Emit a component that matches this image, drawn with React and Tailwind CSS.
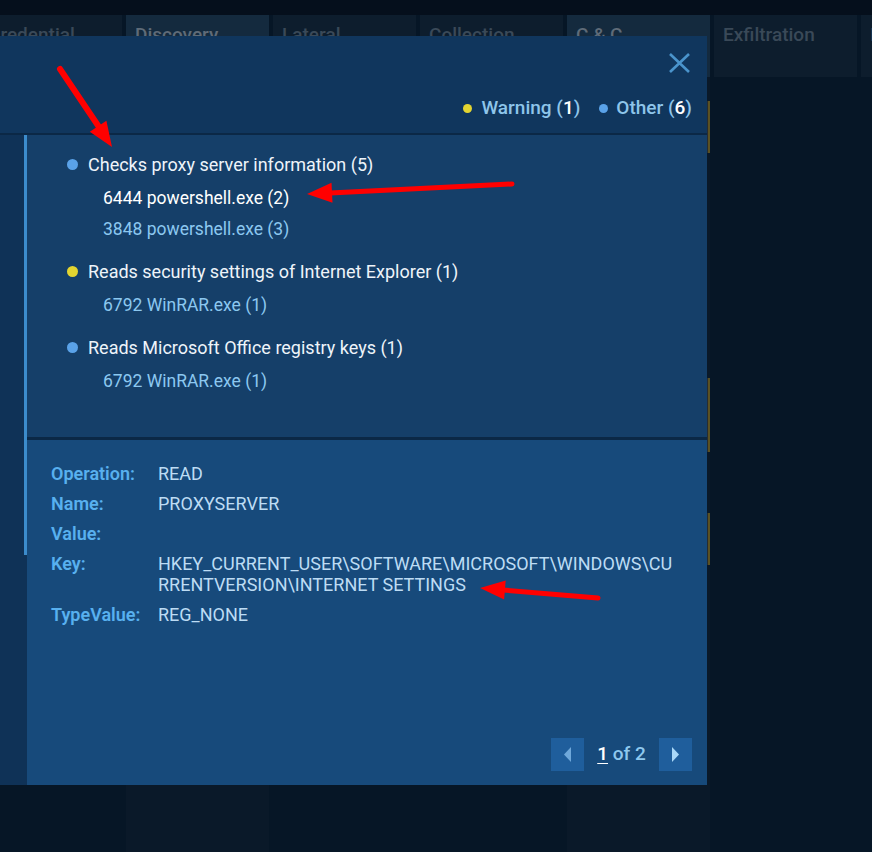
import React from 'react';

const columns = [
    { name: 'Credential', active: false, first: true },
    { name: 'Discovery', active: true },
    { name: 'Lateral', active: false },
    { name: 'Collection', active: false },
    { name: 'C & C', active: true, cards: true },
    { name: 'Exfiltration', active: false },
    { name: 'Impact', active: false },
];

const signatures = [
    {
        title: 'Checks proxy server information (5)',
        dot: 'bg-[#5aa2e8]',
        items: [
            { label: '6444 powershell.exe (2)', selected: true },
            { label: '3848 powershell.exe (3)' },
        ],
    },
    {
        title: 'Reads security settings of Internet Explorer (1)',
        dot: 'bg-[#e3d531]',
        items: [{ label: '6792 WinRAR.exe (1)' }],
    },
    {
        title: 'Reads Microsoft Office registry keys (1)',
        dot: 'bg-[#5aa2e8]',
        items: [{ label: '6792 WinRAR.exe (1)' }],
    },
];

function Column({ col }) {
    return (
        <div className={`flex flex-col w-[143px] shrink-0 ${col.first ? 'ml-[-21px]' : ''}`}>
            <div className={`h-[62px] pl-[9px] pt-[6px] text-[19px] font-medium ${col.active ? 'bg-[#142a3e] text-[#5f6b78]' : 'bg-[#0d1d2d] text-[#3a4958]'}`}>
                {col.name}
            </div>
            <div className={`flex-1 flex flex-col ${col.active ? 'bg-[#0a1929]' : ''}`}>
                {col.cards && (
                    <>
                        <div className="mt-[24px] h-[52px] bg-[#272c32] border-r-[2px] border-[#5a5123]" />
                        <div className="mt-[225px] h-[74px] bg-[#272c32] border-r-[2px] border-[#5a5123]" />
                        <div className="mt-[61px] h-[52px] bg-[#272c32] border-r-[2px] border-[#5a5123]" />
                    </>
                )}
            </div>
        </div>
    );
}

function Detail({ label, children }) {
    return (
        <div className="flex leading-[21px]">
            <div className="w-[107px] shrink-0 font-semibold text-[#58b0ef]">{label}</div>
            <div className="text-[#bddcf4]">{children}</div>
        </div>
    );
}

function Arrows() {
    return (
        <svg className="absolute inset-0 pointer-events-none" width="872" height="852">
            <g stroke="#ff0000" strokeLinecap="round" fill="#ff0000">
                <line x1="60" y1="69" x2="99" y2="127" strokeWidth="6" />
                <polygon points="112,147 89.8,131.8 106.4,120.7" stroke="none" />
                <line x1="512" y1="184" x2="330" y2="193" strokeWidth="5" />
                <polygon points="307,194 331.5,182.8 332.5,202.8" stroke="none" />
                <line x1="598" y1="598" x2="503" y2="590" strokeWidth="5" />
                <polygon points="480,588 505.7,580.6 504.1,599.6" stroke="none" />
            </g>
        </svg>
    );
}

export default function App() {
    return (
        <div className="relative w-[872px] h-[852px] overflow-hidden bg-[#061626] font-['Roboto',sans-serif]">
            <div className="h-[15px] bg-[#050f1c]" />
            <div className="flex gap-[4px] h-[837px]">
                {columns.map(col => (
                    <Column key={col.name} col={col} />
                ))}
            </div>

            {/* dialog */}
            <div className="absolute left-0 top-[36px] w-[707px] h-[749px] flex flex-col">
                <div className="h-[99px] shrink-0 bg-[#10365d] flex flex-col border-b-[2px] border-[#0b2846]">
                    <div className="flex justify-end pr-[17px] pt-[17px]">
                        <svg width="21" height="20" viewBox="0 0 21 20">
                            <path d="M1 1 L20 19 M20 1 L1 19" stroke="#4a94cc" strokeWidth="2.6" fill="none" />
                        </svg>
                    </div>
                    <div className="flex justify-end items-center gap-[19px] pr-[15px] mt-[23px] h-[24px] text-[19px] font-medium text-[#8ec5ea]">
                        <div className="flex items-center gap-[9px]">
                            <span className="w-[9px] h-[9px] rounded-full bg-[#e3d531]" />
                            <span>Warning (<span className="text-white">1</span>)</span>
                        </div>
                        <div className="flex items-center gap-[8px]">
                            <span className="w-[9px] h-[9px] rounded-full bg-[#5aa2e8]" />
                            <span>Other (<span className="text-white">6</span>)</span>
                        </div>
                    </div>
                </div>

                <div className="flex flex-1">
                    <div className="w-[24px] bg-[#0f3257]" />
                    <div className="w-[3px] flex flex-col bg-[#0f3257]">
                        <div className="h-[420px] bg-[#3c8ccc]" />
                    </div>
                    <div className="flex-1 flex flex-col">
                        <div className="h-[302px] bg-[#153f69] pt-[17px] pl-[40px] flex flex-col gap-[14px]">
                            {signatures.map(sig => (
                                <div key={sig.title}>
                                    <div className="flex items-center gap-[10px] h-[24px] text-[18px] text-[#eef4fa]">
                                        <span className={`w-[11px] h-[11px] rounded-full ${sig.dot}`} />
                                        <span>{sig.title}</span>
                                    </div>
                                    <div className="mt-[7px] pl-[36px]">
                                        {sig.items.map((it, i) => (
                                            <div
                                                key={i}
                                                className={`leading-[31px] text-[17.5px] ${it.selected ? 'text-white' : 'text-[#8cc8f0]'}`}
                                            >{it.label}</div>
                                        ))}
                                    </div>
                                </div>
                            ))}
                        </div>
                        <div className="h-[3px] bg-[#0b2846]" />
                        <div className="flex-1 bg-[#174a7b] flex flex-col pl-[24px] pr-[15px] pt-[23px] pb-[14px] text-[18px]">
                            <div className="flex flex-col gap-[9px]">
                                <Detail label="Operation:">READ</Detail>
                                <Detail label="Name:">PROXYSERVER</Detail>
                                <Detail label="Value:"></Detail>
                                <Detail label="Key:">
                                    <span className="block">HKEY_CURRENT_USER\SOFTWARE\MICROSOFT\WINDOWS\CU</span>
                                    <span className="block">RRENTVERSION\INTERNET SETTINGS</span>
                                </Detail>
                                <Detail label="TypeValue:">REG_NONE</Detail>
                            </div>
                            <div className="mt-auto flex justify-end items-center">
                                <button className="w-[33px] h-[33px] bg-[#1f5e9c] flex items-center justify-center">
                                    <svg width="7" height="15" viewBox="0 0 7 15">
                                        <path d="M7 0 L0 7.5 L7 15 Z" fill="#6fa8da" />
                                    </svg>
                                </button>
                                <div className="w-[75px] text-center text-[19px] font-medium text-[#8ec8ee]">
                                    <span className="text-white underline underline-offset-[3px]">1</span> of 2
                                </div>
                                <button className="w-[33px] h-[33px] bg-[#1f5e9c] flex items-center justify-center">
                                    <svg width="7" height="15" viewBox="0 0 7 15">
                                        <path d="M0 0 L7 7.5 L0 15 Z" fill="#a9d8f8" />
                                    </svg>
                                </button>
                            </div>
                        </div>
                    </div>
                </div>
            </div>

            <Arrows />
        </div>
    );
}
